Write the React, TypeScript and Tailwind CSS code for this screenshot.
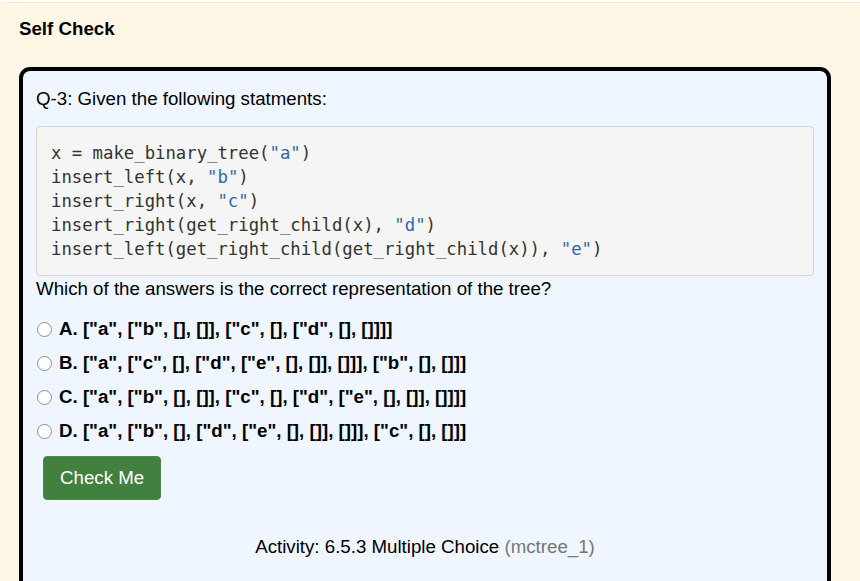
import React from "react";

const codeLines: { parts: { text: string; str?: boolean }[] }[] = [
    { parts: [{ text: "x = make_binary_tree(" }, { text: "\"a\"", str: true }, { text: ")" }] },
    { parts: [{ text: "insert_left(x, " }, { text: "\"b\"", str: true }, { text: ")" }] },
    { parts: [{ text: "insert_right(x, " }, { text: "\"c\"", str: true }, { text: ")" }] },
    { parts: [{ text: "insert_right(get_right_child(x), " }, { text: "\"d\"", str: true }, { text: ")" }] },
    { parts: [{ text: "insert_left(get_right_child(get_right_child(x)), " }, { text: "\"e\"", str: true }, { text: ")" }] },
];

const answers = [
    "A. [\"a\", [\"b\", [], []], [\"c\", [], [\"d\", [], []]]]",
    "B. [\"a\", [\"c\", [], [\"d\", [\"e\", [], []], []]], [\"b\", [], []]]",
    "C. [\"a\", [\"b\", [], []], [\"c\", [], [\"d\", [\"e\", [], []], []]]]",
    "D. [\"a\", [\"b\", [], [\"d\", [\"e\", [], []], []]], [\"c\", [], []]]",
];

const Radio = () => (
    <span className="inline-block h-[15px] w-[15px] shrink-0 rounded-full border border-[#8f8f8f] bg-white" />
);

export default function App() {
    return (
        <div className="min-h-[581px] bg-white pt-[2px] font-['Liberation_Sans',Arial,sans-serif] text-[18.7px] text-black">
            <div className="rounded-tl-[3px] border-t border-[#f6ead0] bg-[#fef7e5] pl-[19px] pr-[29px] pt-[14px]">
                <h2 className="font-bold leading-[24px]">Self Check</h2>

                <div className="mt-[26px] rounded-[11px] border-4 border-black bg-[#eff6ff] px-[13px] pt-[16px] pb-[40px]">
                    <p className="leading-[24px]">Q-3: Given the following statments:</p>

                    <pre className="mt-[15px] rounded-[4px] border border-[#d6d6d6] bg-[#f5f5f5] py-[14px] pl-[14px] font-['DejaVu_Sans_Mono',monospace] text-[17.3px] leading-[24px] text-[#333]">
                        {codeLines.map((line, i) => (
                            <div key={i}>
                                {line.parts.map((p, j) => (
                                    <span key={j} className={p.str ? "text-[#2f69a8]" : ""}>
                                        {p.text}
                                    </span>
                                ))}
                            </div>
                        ))}
                    </pre>

                    <p className="mt-[1px] leading-[24px]">
                        Which of the answers is the correct representation of the tree?
                    </p>

                    <div className="mt-[16px] flex flex-col gap-[10px]">
                        {answers.map((a) => (
                            <label key={a} className="flex items-center gap-[7px] pl-[1px] leading-[24px]">
                                <Radio />
                                <span className="font-bold">{a}</span>
                            </label>
                        ))}
                    </div>

                    <button className="mt-[13px] ml-[7px] rounded-[4px] border border-[#4b8a4a] bg-[#41803f] px-[16px] py-[9px] leading-[24px] text-white">
                        Check Me
                    </button>

                    <p className="mt-[35px] text-center leading-[24px]">
                        Activity: 6.5.3 Multiple Choice <span className="text-[#777]">(mctree_1)</span>
                    </p>
                </div>
            </div>
        </div>
    );
}
